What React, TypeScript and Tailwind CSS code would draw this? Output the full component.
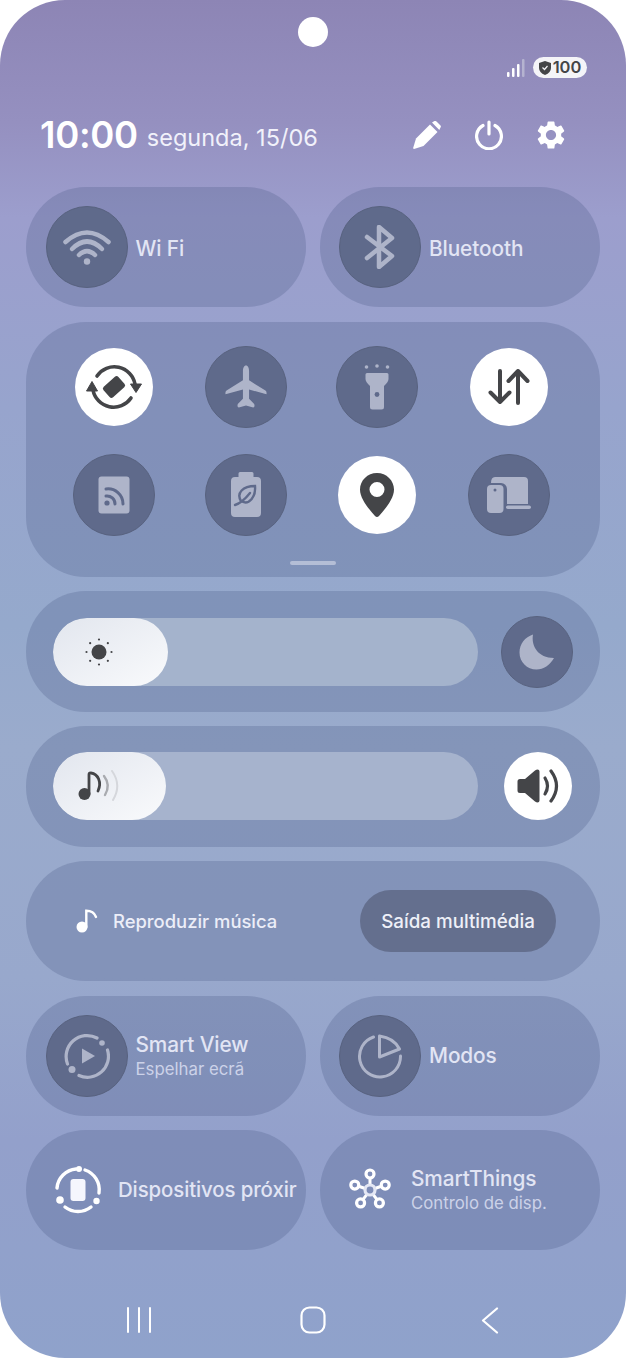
import React from "react";
import { MdSettings } from "react-icons/md";

const G = "#aeb4c9";
const D = "#444548";

function Circle({ children, white, size = "w-[82px] h-[82px]" }: { children: React.ReactNode; white?: boolean; size?: string }) {
  return (
    <div className={`${size} shrink-0 rounded-full flex items-center justify-center ${white ? "bg-white" : "bg-[#5f6a8b] border border-[#58627f]"}`}>
      {children}
    </div>
  );
}

function Tile({ icon, title, sub, textClass, titleClass = "text-[20.800px]" }: { icon: React.ReactNode; title: string; sub?: string; textClass: string; titleClass?: string }) {
  return (
    <div className="w-[280px] h-[120px] rounded-[60px] bg-[#425481]/25 flex items-center overflow-hidden">
      {icon}
      <div className={`${textClass} min-w-0 whitespace-nowrap`}>
        <div className={`${titleClass} leading-[26px] font-medium text-[#e2e5f4] tracking-[-0.1px]`}>{title}</div>
        {sub && <div className="text-[16.800px] leading-[22px] text-[#ccd2e8]">{sub}</div>}
      </div>
    </div>
  );
}

const Wifi = () => (
  <svg width="48" height="36" viewBox="0 0 48 36" fill="none" stroke={G} strokeWidth="4.500" strokeLinecap="round">
    <path d="M2.500 13 Q24 -6 45.500 13" />
    <path d="M9 20 Q24 5 39 20" />
    <path d="M16 26 Q24 18 32 26" />
    <circle cx="24" cy="32.500" r="3.200" fill={G} stroke="none" />
  </svg>
);
const Bluetooth = () => (
  <svg width="32" height="44" viewBox="0 0 32 44" fill="none" stroke={G} strokeWidth="4.500" strokeLinecap="round" strokeLinejoin="round">
    <path d="M3 12 L28 31 L15 42 V2 L28 13 L3 33" />
  </svg>
);
const Rotate = () => (
  <svg width="56" height="56" viewBox="-28 -28 56 56" fill="none">
    <path d="M-17 -11 A21 21 0 0 1 21 -3" stroke={D} strokeWidth="3.600" strokeLinecap="round" />
    <path d="M17 11 A21 21 0 0 1 -21 3" stroke={D} strokeWidth="3.600" strokeLinecap="round" />
    <path d="M16.500 -3 L27.500 -3 L22 5.500 Z" fill={D} stroke={D} strokeLinejoin="round" />
    <path d="M-16.500 4 L-27.500 4 L-22 -5.500 Z" fill={D} stroke={D} strokeLinejoin="round" />
    <rect x="-10" y="-7" width="20" height="14" rx="2.500" transform="rotate(-42)" fill={D} />
  </svg>
);
const Plane = () => (
  <svg width="44" height="44" viewBox="0 0 42 43" fill={G}>
    <path d="M21 .5C19 .5 18 3 18 6V15L2 25Q.5 26 1 28.500L18 24V33L13 38Q12 41.500 14 41.500L21 39.500L28 41.500Q30 41.500 29 38L24 33V24L41 28.500Q41.500 26 40 25L24 15V6C24 3 23 .5 21 .5Z" />
  </svg>
);
const Torch = () => (
  <svg width="26" height="46" viewBox="0 0 26 46" fill={G}>
    <circle cx="2.500" cy="3" r="1.800" />
    <circle cx="13" cy="2" r="1.800" />
    <circle cx="23.500" cy="3" r="1.800" />
    <path d="M3 9H23a1.500 1.500 0 0 1 1.500 1.500V15Q24.500 18 20 22V43a2.500 2.500 0 0 1-2.500 2.500H8.500A2.500 2.500 0 0 1 6 43V22Q1.500 18 1.500 15V10.500A1.500 1.500 0 0 1 3 9Z" />
    <circle cx="13" cy="30.500" r="2.400" fill="#5f6a8b" />
  </svg>
);
const Arrows = () => (
  <svg width="42" height="38" viewBox="0 0 42 38" fill="none" stroke={D} strokeWidth="4" strokeLinecap="round" strokeLinejoin="round">
    <path d="M12 3V34M2.500 24.500L12 34L21.500 24.500" />
    <path d="M30 35V3M20.500 13L30 3L39.500 13" />
  </svg>
);
const RssCard = () => (
  <svg width="32" height="38" viewBox="0 0 32 38">
    <rect x=".5" y=".5" width="31" height="37" rx="3" fill={G} />
    <g fill="none" stroke="#5f6a8b" strokeWidth="3" strokeLinecap="round">
      <path d="M8 20A8 8 0 0 1 17 28" />
      <path d="M8 13A15 15 0 0 1 25 28" />
    </g>
    <circle cx="9" cy="27" r="2.600" fill="#5f6a8b" />
  </svg>
);
const BatteryLeaf = () => (
  <svg width="30" height="45" viewBox="0 0 30 45">
    <path d="M9 0H21a1.500 1.500 0 0 1 1.500 1.500V5H26a4 4 0 0 1 4 4V41a4 4 0 0 1-4 4H4a4 4 0 0 1-4-4V9a4 4 0 0 1 4-4H7.500V1.500A1.500 1.500 0 0 1 9 0Z" fill={G} />
    <path d="M10 29C5 21 12 14 24 14C25 25 18 33 11 29.500" fill="none" stroke="#5f6a8b" strokeWidth="2.400" />
    <path d="M4 33Q11 31 19 21" fill="none" stroke="#5f6a8b" strokeWidth="2.400" strokeLinecap="round" />
  </svg>
);
const Pin = () => (
  <svg width="36" height="46" viewBox="0 0 36 46">
    <path fillRule="evenodd" d="M18 1C8.500 1 1 8.500 1 17.500C1 27 10 37 16 44Q18 46 20 44C26 37 35 27 35 17.500C35 8.500 27.500 1 18 1ZM18 10a7.500 7.500 0 1 1 0 15a7.500 7.500 0 0 1 0-15Z" fill={D} />
  </svg>
);
const Devices = () => (
  <svg width="44" height="36" viewBox="0 0 44 36" fill={G}>
    <path d="M8 0H37a4 4 0 0 1 4 4V27H20V12a6 6 0 0 0-6-6H4Q4 0 8 0Z" />
    <rect x="0" y="8" width="16.500" height="28" rx="4" />
    <circle cx="8" cy="13" r="1.500" fill="#5f6a8b" />
    <rect x="19" y="28.500" width="25" height="3.600" rx="1.800" />
  </svg>
);
const Sun = () => {
  const pts = [0, 45, 90, 135, 180, 225, 270, 315];
  return (
    <svg width="28" height="28" viewBox="-14 -14 28 28">
      <circle r="7.500" fill={D} />
      {pts.map((a) => (
        <circle key={a} cx={12.500 * Math.cos((a * Math.PI) / 180)} cy={12.500 * Math.sin((a * Math.PI) / 180)} r="1.100" fill={D} />
      ))}
    </svg>
  );
};
const Note = () => (
  <svg width="42" height="32" viewBox="0 0 42 32" fill="none">
    <circle cx="6.500" cy="24" r="6" fill={D} />
    <path d="M11 24V4.500Q11 2.500 13 3C20 4 24 12 20 21" stroke={D} strokeWidth="2.800" strokeLinecap="round" />
    <path d="M26 6Q33 15 27 25" stroke="#a9abb0" strokeWidth="2.400" strokeLinecap="round" />
    <path d="M34 1Q44 15 35 30" stroke="#d5d7dc" strokeWidth="2" strokeLinecap="round" />
  </svg>
);
const Moon = () => (
  <svg width="36" height="36" viewBox="0 0 36 36">
    <path d="M14 .5C12 12 19 24 35 24C31 31 24.500 35.500 17.500 35.500C8 35.500 .5 28 .5 18.500C.5 10 6 3 14 .5Z" fill={G} />
  </svg>
);
const Speaker = () => (
  <svg width="42" height="34" viewBox="0 0 42 34" fill="none">
    <path d="M20.500 .5Q22.500 .5 22.500 2.500V31.500Q22.500 33.500 20.500 33.500Q19.500 33.500 18 32.500L8 24H3Q.5 24 .5 21.500V12.500Q.5 10 3 10H8L18 1.500Q19.500 .5 20.500 .5Z" fill={D} />
    <path d="M28 9Q33 17 28 25" stroke={D} strokeWidth="3.200" strokeLinecap="round" />
    <path d="M34 2Q45 17 34 32" stroke={D} strokeWidth="3.200" strokeLinecap="round" />
  </svg>
);
const SmallNote = () => (
  <svg width="22" height="24" viewBox="0 0 22 24" fill="none">
    <circle cx="6" cy="18" r="5.500" fill="#fff" />
    <path d="M10.300 18V1.800C15 1.800 18.500 4 20 8" stroke="#fff" strokeWidth="2.400" strokeLinecap="round" />
  </svg>
);
const SmartView = () => (
  <svg width="46" height="46" viewBox="-23 -23 46 46" fill="none" stroke={G} strokeWidth="3.200" strokeLinecap="round">
    <path d="M-19.500 8A21 21 0 0 1 10 -18" />
    <path d="M20.500 -6A21 21 0 0 1 -8 19.500" />
    <circle cx="15" cy="-13" r="2.800" fill={G} stroke="none" />
    <circle cx="-15" cy="13.500" r="3.500" fill={G} stroke="none" />
    <path d="M-5 -7.500L8 0L-5 7.500Z" fill={G} stroke="none" />
  </svg>
);
const Modos = () => (
  <svg width="46" height="46" viewBox="0 0 46 46" fill="none" stroke={G} strokeWidth="3" strokeLinecap="round" strokeLinejoin="round">
    <path d="M16.500 4A20.500 20.500 0 1 0 43.500 23" />
    <path d="M22.500 3V24L42.500 16Q37 5 22.500 3Z" />
  </svg>
);
const Nearby = () => (
  <svg width="48" height="48" viewBox="-24 -24 48 48" fill="none" stroke="#fff" strokeWidth="3.400" strokeLinecap="round">
    <path d="M-2 -21A21 21 0 0 0 -21 -2" />
    <path d="M7 -20A21 21 0 0 1 21 3" />
    <path d="M-13 17A21 21 0 0 0 13 17" />
    <circle cx="1" cy="-21" r="3" fill="#fff" stroke="none" />
    <circle cx="18.500" cy="11" r="3.200" fill="#fff" stroke="none" />
    <circle cx="-18" cy="10" r="3.800" fill="#fff" stroke="none" />
    <rect x="-7.500" y="-11" width="15" height="22" rx="3" fill="#f5f6fd" stroke="none" />
  </svg>
);
const SmartThings = () => {
  const a = [-90, -18, 54, 126, 198];
  return (
    <svg width="44" height="44" viewBox="-22 -22 44 44" fill="none" stroke="#fff" strokeWidth="3.200">
      {a.map((d) => {
        const r = (d * Math.PI) / 180;
        return (
          <g key={d}>
            <line x1={5 * Math.cos(r)} y1={5 * Math.sin(r)} x2={12 * Math.cos(r)} y2={12 * Math.sin(r)} strokeWidth="3" />
            <circle cx={16 * Math.cos(r)} cy={16 * Math.sin(r)} r="4" />
          </g>
        );
      })}
      <circle r="5" stroke="#e4e7f4" />
    </svg>
  );
};

export default function App() {
  return (
    <div className="w-[626px] h-[1358px] bg-white font-['Inter',sans-serif]">
      <div className="relative w-[626px] h-[1358px] rounded-[65px] overflow-hidden bg-[linear-gradient(180deg,#8d85b5_0%,#9590c0_9%,#9c9ecd_16%,#97a4cd_30%,#95a9cc_46%,#9aabcc_55%,#98a8cc_72%,#93a0cb_84%,#8fa2cb_100%)]">
        <div className="absolute left-[298px] top-[17px] w-[30px] h-[30px] rounded-full bg-white" />

        <div className="pt-[57px] pr-[39px] flex justify-end items-center h-[78px] gap-[8px]">
          <svg width="18" height="18" viewBox="0 0 18 18" className="mb-[-1px]">
            <rect x="0" y="13" width="2.500" height="5" rx="1" fill="#fff" />
            <rect x="5" y="9" width="2.500" height="9" rx="1" fill="#fff" />
            <rect x="10" y="5" width="2.500" height="13" rx="1" fill="#fff" />
            <rect x="15" y="0" width="2.500" height="18" rx="1" fill="#b5b3d0" />
          </svg>
          <div className="w-[54px] h-[21px] rounded-full bg-[#f4f4f8] flex items-center justify-center gap-[2px] text-[16.500px] font-semibold text-[#444548] leading-none">
            <svg width="12" height="14" viewBox="0 0 12 14">
              <path d="M6 0L12 2V7Q12 11.500 6 14Q0 11.500 0 7V2Z" fill="#444548" />
              <path d="M3.500 6.500L5.500 8.500L8.500 5" fill="none" stroke="#f4f4f8" strokeWidth="1.200" />
            </svg>
            <span>100</span>
          </div>
        </div>

        <div className="mt-[36px] h-[42px] pl-[40px] pr-[61px] flex items-center text-white">
          <span className="text-[36.500px] leading-none font-semibold tracking-[-0.3px]">10:00</span>
          <span className="ml-[9px] mt-[5px] text-[23.500px] leading-none text-[#f1f1fa]">segunda, 15/06</span>
          <div className="ml-auto flex items-center gap-[34px]">
            <svg width="28" height="28" viewBox="0 0 28 28" fill="#fff">
              <path d="M1 28Q0 28 .3 26.500L3 17.500L17 3.500L24.500 11L10.500 25Z" />
              <path d="M19 1.500L21.500 0Q22.500 -.3 23.500 .5L27.500 4.500Q28.300 5.500 27.500 6.500L26.300 9Z" />
            </svg>
            <svg width="28" height="30" viewBox="0 0 28 30" fill="none" stroke="#fff" strokeWidth="3.200" strokeLinecap="round">
              <path d="M14 2V14" />
              <path d="M8 5.500A12.400 12.400 0 1 0 20 5.500" />
            </svg>
            <MdSettings size={34} color="#fff" className="mx-[-3px]" />
          </div>
        </div>

        <div className="mt-[31px] px-[26px] flex flex-col gap-[14.500px]">
          <div className="flex justify-between">
            <Tile icon={<div className="ml-[20px]"><Circle><Wifi /></Circle></div>} title="Wi Fi" textClass="ml-[7.500px] mt-[3px]" />
            <Tile icon={<div className="ml-[19px]"><Circle><Bluetooth /></Circle></div>} title="Bluetooth" textClass="ml-[8px] mt-[3px]" />
          </div>

          <div className="h-[255px] rounded-[60px] bg-[#425481]/25 pt-[24px] flex flex-col items-center">
            <div className="w-[526px] ml-[-3px] grid grid-cols-4 gap-x-[0px] gap-y-[26px] justify-items-center items-center">
              <Circle white size="w-[78px] h-[78px]"><Rotate /></Circle>
              <Circle><Plane /></Circle>
              <Circle><Torch /></Circle>
              <Circle white size="w-[78px] h-[78px]"><Arrows /></Circle>
              <Circle><RssCard /></Circle>
              <Circle><BatteryLeaf /></Circle>
              <Circle white size="w-[78px] h-[78px]"><Pin /></Circle>
              <Circle><Devices /></Circle>
            </div>
            <div className="mt-[25px] w-[46px] h-[4px] rounded-full bg-[#b4bed6]" />
          </div>

          <div className="h-[120.500px] pt-[1px] rounded-[60px] bg-[#425481]/25 flex items-center pl-[27px]">
            <div className="w-[425px] h-[68px] rounded-[34px] bg-[#a4b3cc] overflow-hidden">
              <div className="w-[115px] h-[68px] rounded-[34px] bg-gradient-to-br from-[#e2e6ee] to-[#f9fafc] flex items-center pl-[32px]">
                <Sun />
              </div>
            </div>
            <div className="flex-1 mr-[4px] flex justify-center">
              <Circle size="w-[72px] h-[72px]"><Moon /></Circle>
            </div>
          </div>

          <div className="h-[120.500px] rounded-[60px] bg-[#425481]/25 flex items-center pl-[27px]">
            <div className="w-[425px] h-[68px] rounded-[34px] bg-[#a6b3cd] overflow-hidden">
              <div className="w-[113px] h-[68px] rounded-[34px] bg-gradient-to-br from-[#e2e6ee] to-[#f9fafc] flex items-center pl-[25px]">
                <Note />
              </div>
            </div>
            <div className="flex-1 mr-[3px] flex justify-center">
              <Circle white size="w-[68px] h-[68px]"><Speaker /></Circle>
            </div>
          </div>

          <div className="h-[120px] rounded-[60px] bg-[#425481]/25 flex items-center pl-[50px]">
            <SmallNote />
            <span className="ml-[15px] mt-[2px] text-[18.400px] font-medium text-[#eceef8]">Reproduzir música</span>
            <div className="ml-auto mr-[44px] pt-[3px] w-[196px] h-[62px] rounded-full bg-[#646f8e] flex items-center justify-center text-[18.800px] font-medium text-[#eef0f8]">
              Saída multimédia
            </div>
          </div>

          <div className="flex justify-between">
            <Tile icon={<div className="ml-[20px]"><Circle><SmartView /></Circle></div>} title="Smart View" sub="Espelhar ecrã" textClass="ml-[7.500px]" />
            <Tile icon={<div className="ml-[19px]"><Circle><Modos /></Circle></div>} title="Modos" textClass="ml-[8px]" />
          </div>
          <div className="flex justify-between">
            <Tile icon={<div className="ml-[28px]"><Nearby /></div>} title="Dispositivos próxir" titleClass="text-[20.400px]" textClass="ml-[16px]" />
            <Tile icon={<div className="ml-[28px]"><SmartThings /></div>} title="SmartThings" sub="Controlo de disp." textClass="ml-[19px]" />
          </div>
        </div>

        <div className="mt-[56px] pl-[127px] flex items-center h-[28px]">
          <svg width="24" height="26" viewBox="0 0 24 26" fill="none" stroke="#fff" strokeWidth="2" strokeLinecap="round">
            <path d="M1 1V25M12 1V25M23 1V25" />
          </svg>
          <svg width="26" height="28" viewBox="0 0 26 28" fill="none" stroke="#fff" strokeWidth="2.200" className="ml-[149px]">
            <rect x="1.500" y="1.500" width="23" height="25" rx="8" />
          </svg>
          <svg width="18" height="27" viewBox="0 0 18 27" fill="none" stroke="#fff" strokeWidth="2.200" strokeLinecap="round" strokeLinejoin="round" className="ml-[155px]">
            <path d="M16 1.500L2 13.500L16 25.500" />
          </svg>
        </div>
      </div>
    </div>
  );
}
